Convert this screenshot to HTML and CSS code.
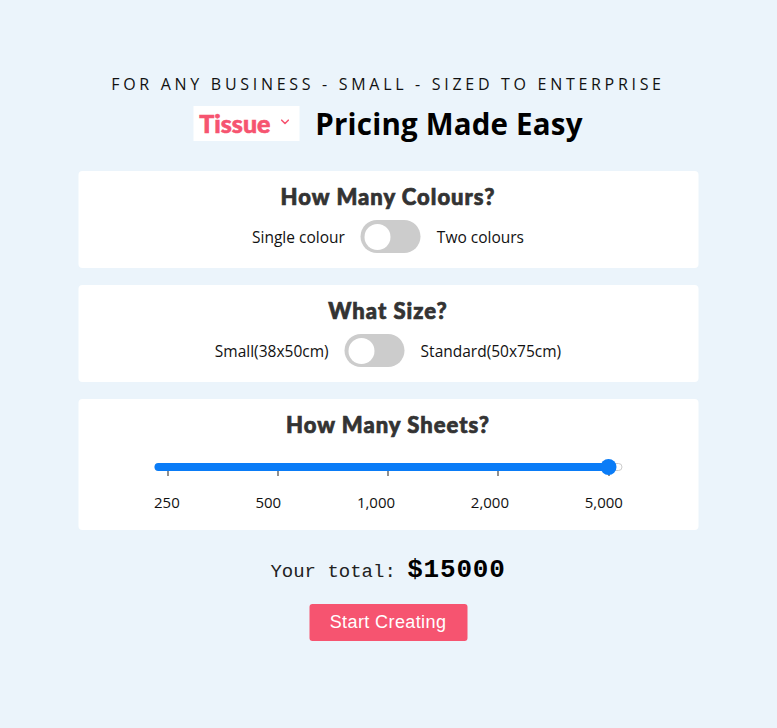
FILE: index.html
```html
<!DOCTYPE html>
<html lang="en">
<head>
<meta charset="utf-8">
<title>Pricing</title>
<link rel="stylesheet" href="styles.css">
</head>
<body>
<main class="page">
  <p class="eyebrow">FOR ANY BUSINESS - SMALL - SIZED TO ENTERPRISE</p>
  <div class="title-row">
    <div class="select">
      <span class="select-text">Tissue</span>
      <svg class="chev" width="9" height="6" viewBox="0 0 9 6"><path d="M1.2 1.2 L4.5 4.5 L7.8 1.2" fill="none" stroke="#f65470" stroke-width="1.6" stroke-linecap="round" stroke-linejoin="round"/></svg>
    </div>
    <h1 class="title">Pricing Made Easy</h1>
  </div>

  <section class="card">
    <h2 class="card-title">How Many Colours?</h2>
    <div class="toggle-row">
      <span class="opt">Single colour</span>
      <span class="switch"><span class="knob"></span></span>
      <span class="opt">Two colours</span>
    </div>
  </section>

  <section class="card">
    <h2 class="card-title">What Size?</h2>
    <div class="toggle-row">
      <span class="opt">Small(38x50cm)</span>
      <span class="switch"><span class="knob"></span></span>
      <span class="opt">Standard(50x75cm)</span>
    </div>
  </section>

  <section class="card card-slider">
    <h2 class="card-title">How Many Sheets?</h2>
    <div class="slider">
      <div class="track">
        <div class="fill"></div>
        <div class="thumb"></div>
      </div>
      <div class="ticks">
        <span class="tick"></span><span class="tick"></span><span class="tick"></span><span class="tick"></span><span class="tick"></span>
      </div>
      <div class="labels">
        <span>250</span><span>500</span><span>1,000</span><span>2,000</span><span>5,000</span>
      </div>
    </div>
  </section>

  <p class="total">Your total: <strong>$15000</strong></p>
  <div class="cta-wrap"><button class="cta">Start Creating</button></div>
</main>
</body>
</html>
```
FILE: styles.css
```css
* { box-sizing: border-box; }
body {
  margin: 0;
  background: #ebf4fb;
  font-family: "Open Sans", "Noto Sans", sans-serif;
  color: #111;
}
.page {
  width: 620px;
  margin: 0 auto;
  padding-top: 73px;
  transform: translateX(-0.5px);
}
.eyebrow {
  margin: 0;
  text-align: center;
  font-size: 16px;
  letter-spacing: 3.7px;
  line-height: 22px;
  color: #111;
}
.title-row {
  display: flex;
  justify-content: center;
  align-items: center;
  gap: 16px;
  margin-top: 11px;
  height: 35px;
}
.select {
  background: #fff;
  width: 106px;
  height: 35px;
  display: flex;
  align-items: center;
  padding-left: 6px;
  gap: 10px;
}
.select-text {
  font-family: "Lato", sans-serif;
  font-weight: 900;
  font-size: 25px;
  color: #f65470;
  line-height: 1;
  -webkit-text-stroke: 0.6px #f65470;
}
.chev { margin-top: -4px; }
.title {
  margin: 0;
  font-size: 29.5px;
  line-height: 35px;
  font-weight: 700;
  color: #000;
  letter-spacing: 0.2px;
}
.card {
  background: #fff;
  border-radius: 4px;
  margin-top: 17px;
  padding: 13px 0 15px;
  text-align: center;
}
.title-row + .card { margin-top: 30px; }
.card-title {
  margin: 0;
  font-family: "Lato", sans-serif;
  font-weight: 900;
  font-size: 22px;
  color: #333;
  letter-spacing: 1px;
  line-height: 26px;
  -webkit-text-stroke: 0.7px #333;
}
.toggle-row {
  display: flex;
  justify-content: center;
  align-items: center;
  gap: 16px;
  margin-top: 10px;
  height: 33px;
}
.opt {
  font-size: 15.5px;
  color: #111;
}
.switch {
  width: 60px;
  height: 33px;
  background: #ccc;
  border-radius: 17px;
  display: flex;
  align-items: center;
  padding-left: 4px;
}
.knob {
  width: 26px;
  height: 26px;
  border-radius: 50%;
  background: #fff;
}
.card-slider { padding-bottom: 18px; }
.slider {
  width: 470px;
  margin: 0 auto;
  margin-top: 25px;
  padding-left: 1px;
}
.track {
  position: relative;
  height: 8px;
  width: 468px;
  border-radius: 4px;
  background: #fff;
  border: 1px solid #ccc;
}
.fill {
  position: absolute;
  left: -1px;
  top: -1px;
  width: 455px;
  height: 8px;
  background: #0a7cf7;
  border-radius: 4px;
}
.thumb {
  position: absolute;
  left: 445px;
  top: -5px;
  width: 16px;
  height: 16px;
  border-radius: 50%;
  background: #0a7cf7;
}
.ticks {
  display: flex;
  justify-content: space-between;
  padding: 0 14px 0 13px;
}
.tick {
  width: 1px;
  height: 5px;
  background: #222;
}
.labels {
  display: flex;
  justify-content: space-between;
  margin-top: 16px;
  font-size: 15px;
  line-height: 20px;
  color: #111;
}
.total {
  margin: 25px 0 0;
  text-align: center;
  font-family: "Liberation Mono", "Courier New", monospace;
  font-size: 19px;
  color: #222;
}
.total strong {
  font-size: 26px;
  font-weight: 700;
  color: #000;
  letter-spacing: 0.8px;
}
.cta-wrap {
  display: flex;
  justify-content: center;
  margin-top: 19px;
}
.cta {
  background: #f65470;
  color: #fff;
  border: none;
  border-radius: 3px;
  width: 158px;
  height: 37px;
  font-family: "Liberation Sans", Arial, sans-serif;
  font-size: 18px;
  letter-spacing: 0.4px;
}
```
